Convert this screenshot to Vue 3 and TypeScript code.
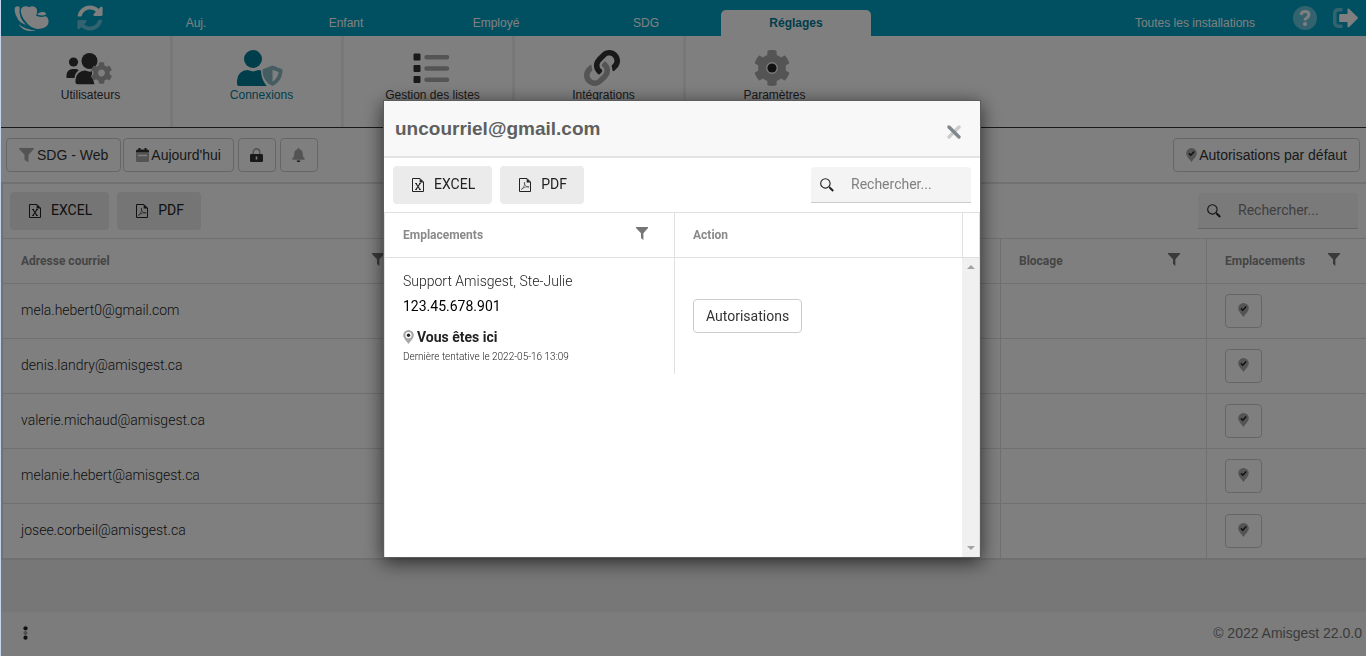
<script setup lang="ts">
import { ref } from 'vue'

interface RibbonItem {
  id: string
  label: string
  active?: boolean
}

const tabs: string[] = ['Auj.', 'Enfant', 'Employé', 'SDG', 'Réglages']
const activeTab = ref<string>('Réglages')

const ribbon: RibbonItem[] = [
  { id: 'users', label: 'Utilisateurs' },
  { id: 'shield', label: 'Connexions', active: true },
  { id: 'list', label: 'Gestion des listes' },
  { id: 'link', label: 'Intégrations' },
  { id: 'settings', label: 'Paramètres' },
]

const emails: string[] = [
  'mela.hebert0@gmail.com',
  'denis.landry@amisgest.ca',
  'valerie.michaud@amisgest.ca',
  'melanie.hebert@amisgest.ca',
  'josee.corbeil@amisgest.ca',
]

const search = ref('')
const dialogSearch = ref('')
</script>

<template>
  <svg class="sprite" aria-hidden="true">
    <symbol id="i-funnel" viewBox="0 0 12 13">
      <path d="M0 0h12v1L7.4 6.2V13L5 11V6.2L0 1z" fill="currentColor" />
    </symbol>
    <symbol id="i-search" viewBox="0 0 14 14">
      <circle cx="5.4" cy="5.4" r="4.7" fill="none" stroke="currentColor" stroke-width="1.1" />
      <path d="M8.8 8.8l1.2 1" stroke="currentColor" stroke-width="1" />
      <path d="M9.6 9.6l3.6 3.4" stroke="currentColor" stroke-width="2" />
    </symbol>
    <symbol id="i-excel" viewBox="0 0 13 14">
      <path d="M.5.5h7.500l3.500 3.500v9.500H.5z" fill="none" stroke="currentColor" stroke-width="1" />
      <path d="M7.700.4V4.500h4z" fill="currentColor" />
      <path d="M4 5.500l4 6M8 5.500l-4 6" stroke="currentColor" stroke-width="1.200" />
      <path d="M3.200 5.500H5M7 5.500h1.800M3.200 11.500H5M7 11.500h1.800" stroke="currentColor" stroke-width="1" />
    </symbol>
    <symbol id="i-pdf" viewBox="0 0 13 14">
      <path d="M.5.5h7.500l3.500 3.500v9.500H.5z" fill="none" stroke="currentColor" stroke-width="1" />
      <path d="M7.700.4V4.500h4z" fill="currentColor" />
      <path d="M5.500 4.200c-.6 2 .8 4.400 4.600 4.800C7.500 8.400 4.100 9.400 2.300 11.400c1.800-.4 3.800-4.400 3.200-7.200z" fill="none" stroke="currentColor" stroke-width=".8" opacity=".7" />
    </symbol>
    <symbol id="i-pin" viewBox="0 0 11 14">
      <path d="M5.500 0A5.300 5.300 0 0 0 .2 5.300C.2 8.200 3 10.500 5.500 14 8 10.500 10.800 8.200 10.800 5.300A5.300 5.300 0 0 0 5.500 0z" fill="#a8a8a8" />
      <path d="M2.900 5.400l1.900 1.800 3.400-3.600" fill="none" stroke="#222" stroke-width="1.500" />
    </symbol>
    <symbol id="i-cog" viewBox="0 0 512 512">
      <path fill="currentColor" d="M487.4 315.700l-42.600-24.600c4.300-23.200 4.300-47 0-70.200l42.600-24.600c4.900-2.800 7.100-8.600 5.500-14-11.100-35.600-30-67.800-54.700-94.600-3.800-4.100-10-5.100-14.800-2.300L380.800 110c-17.900-15.400-38.500-27.300-60.800-35.100V25.800c0-5.600-3.900-10.500-9.400-11.700-36.700-8.200-74.300-7.800-109.200 0-5.500 1.200-9.400 6.100-9.400 11.700V75c-22.200 7.900-42.800 19.800-60.800 35.100L88.700 85.500c-4.900-2.800-11-1.900-14.800 2.300-24.700 26.700-43.600 58.900-54.700 94.600-1.700 5.400.6 11.200 5.500 14L67.300 221c-4.300 23.200-4.300 47 0 70.200l-42.600 24.600c-4.900 2.800-7.100 8.600-5.500 14 11.100 35.600 30 67.800 54.700 94.600 3.800 4.100 10 5.100 14.800 2.300l42.600-24.600c17.900 15.400 38.500 27.300 60.800 35.100v49.200c0 5.600 3.900 10.500 9.400 11.700 36.700 8.200 74.300 7.800 109.200 0 5.500-1.200 9.400-6.100 9.400-11.700v-49.200c22.200-7.900 42.800-19.800 60.800-35.100l42.600 24.600c4.900 2.800 11 1.900 14.800-2.300 24.700-26.700 43.600-58.900 54.700-94.600 1.500-5.500-.7-11.300-5.600-14.100zM256 336c-44.100 0-80-35.900-80-80s35.900-80 80-80 80 35.900 80 80-35.900 80-80 80z" />
    </symbol>
    <symbol id="i-users" viewBox="0 0 46 36">
      <circle cx="7.500" cy="12" r="4.600" fill="#333" />
      <path d="M.5 28v-3a6 6 0 0 1 6-6h2.500c1.500 0 2.800.5 3.800 1.300-2.500 1.800-4 4.300-4.300 7.700z" fill="#333" />
      <circle cx="23.500" cy="11" r="8" fill="#333" />
      <path d="M9.500 32.500V30a9.500 9.500 0 0 1 9.500-9.500l4.500 1.200 2.500-.5v3l-1 2 2 3 1.500 5H11.500a2 2 0 0 1-2-1.700z" fill="#333" />
      <use href="#i-cog" x="24.500" y="12" width="22" height="22" color="#a9a9a9" />
    </symbol>
    <symbol id="i-shield" viewBox="0 0 46 36">
      <circle cx="16" cy="9" r="9" fill="#007c98" />
      <path d="M0 34v-3.500A10.500 10.500 0 0 1 10.500 20l5.500 1.500 5.500-1.500 2.500.4C24.300 27 26.500 32.500 30 36H2a2 2 0 0 1-2-2z" fill="#007c98" />
      <path d="M35.500 15.500l9 3.500c1 .4 1 1 1 2-.3 7-4 12-10 15-6-3-9.700-8-10-15 0-1 0-1.600 1-2zm0 4.200v12c3.800-2.400 5.800-5.700 6.200-9.600z" fill-rule="evenodd" fill="#8ab8c2" />
    </symbol>
    <symbol id="i-list" viewBox="0 0 46 36">
      <path d="M6 4h6v6H6zM6 15.500h6v6H6zM6 26.500h6v6H6z" fill="#333" stroke="#333" stroke-linejoin="round" />
      <path d="M18.500 7.200h20.500M18.500 18.500h20.500M18.500 29.700h20.500" stroke="#a9a9a9" stroke-width="4.500" stroke-linecap="round" />
    </symbol>
    <symbol id="i-link" viewBox="-71 0 654 512">
      <path fill="#a9a9a9" d="M326.612 185.391c59.747 59.809 58.927 155.698.36 214.590-.11.12-.24.25-.36.370l-67.200 67.200c-59.270 59.270-155.699 59.262-214.960 0-59.270-59.260-59.270-155.700 0-214.960l37.106-37.106c9.840-9.840 26.786-3.300 27.294 10.606.648 17.722 3.826 35.527 9.690 52.721 1.986 5.822.567 12.262-3.783 16.612l-13.087 13.087c-28.026 28.026-28.905 73.660-1.155 101.960 28.024 28.579 74.086 28.749 102.325.510l67.200-67.190c28.191-28.191 28.073-73.757 0-101.830-3.701-3.694-7.429-6.564-10.341-8.569a16.037 16.037 0 0 1-6.947-12.606c-.396-10.567 3.348-21.456 11.698-29.806l21.054-21.055c5.521-5.521 14.182-6.199 20.584-1.731a152.482 152.482 0 0 1 20.522 17.197z" />
      <path fill="#333" d="M467.547 44.449c-59.261-59.262-155.690-59.270-214.960 0l-67.200 67.200c-.12.12-.25.25-.36.370-58.566 58.892-59.387 154.781.36 214.590a152.454 152.454 0 0 0 20.521 17.196c6.402 4.468 15.064 3.789 20.584-1.731l21.054-21.055c8.350-8.350 12.094-19.239 11.698-29.806a16.037 16.037 0 0 0-6.947-12.606c-2.912-2.005-6.640-4.875-10.341-8.569-28.073-28.073-28.191-73.639 0-101.830l67.200-67.190c28.239-28.239 74.300-28.069 102.325.510 27.750 28.300 26.872 73.934-1.155 101.960l-13.087 13.087c-4.350 4.350-5.769 10.790-3.783 16.612 5.864 17.194 9.042 34.999 9.690 52.721.509 13.906 17.454 20.446 27.294 10.606l37.106-37.106c59.271-59.259 59.271-155.699.001-214.959z" />
    </symbol>
    <symbol id="i-settings" viewBox="0 0 46 36">
      <use href="#i-cog" x="3.500" y="-.5" width="37" height="37" color="#a9a9a9" />
      <circle cx="22" cy="18" r="4.600" fill="#222" />
    </symbol>
  </svg>

  <div class="page">
    <header class="topbar">
      <div class="brand">
        <svg class="logo" viewBox="0 0 105 80" role="img" aria-label="Amisgest">
          <g fill="#fff">
            <path d="M2 12C2 4 10 1 16 5c3 3-1 9 1 20 2 13 8 24 19 34-12-2-22-10-28-24C4 27 2 20 2 12z" />
            <path d="M21 12C24 3 38 0 45 6c9-6 22-2 24 8 1 8-1 13-3 18 8 4 18 4 30 1 9 5 10 21 3 29-10 11-37 14-53-1-14-12-28-31-25-49z" />
            <path d="M14 57c14 11 28 16 52 19-18 5-42 0-52-19z" />
            <path d="M70 28c3-8 20-10 26-4 1 8-14 8-26 4z" />
          </g>
        </svg>
        <button class="plain" type="button" aria-label="Actualiser">
          <svg width="26" height="26" viewBox="0 0 512 512" fill="#fff">
            <path d="M370.720 133.280C339.458 104.008 298.888 87.962 255.848 88c-77.458.068-144.328 53.178-162.791 126.850-1.344 5.363-6.122 9.150-11.651 9.150H24.103c-7.498 0-13.194-6.807-11.807-14.176C33.933 94.924 134.813 8 256 8c66.448 0 126.791 26.136 171.315 68.685L463.030 40.970C478.149 25.851 504 36.559 504 57.941V192c0 13.255-10.745 24-24 24H345.941c-21.382 0-32.090-25.851-16.971-40.971z" />
            <path opacity=".4" d="M32 296h134.059c21.382 0 32.090 25.851 16.971 40.971l-41.750 41.750c31.262 29.273 71.835 45.319 114.876 45.280 77.418-.07 144.315-53.144 162.787-126.849 1.344-5.363 6.122-9.150 11.651-9.150h57.304c7.498 0 13.194 6.807 11.807 14.176C478.067 417.076 377.187 504 256 504c-66.448 0-126.791-26.136-171.315-68.685L48.970 471.030C33.851 486.149 8 475.441 8 454.059V320c0-13.255 10.745-24 24-24z" />
          </svg>
        </button>
      </div>
      <nav class="tabs">
        <a v-for="t in tabs" :key="t" href="#" class="tab" :class="{ current: t === activeTab }" @click.prevent="activeTab = t">{{ t }}</a>
      </nav>
      <a href="#" class="sites">Toutes les installations</a>
      <button class="plain help" type="button" aria-label="Aide">
        <svg width="24" height="24" viewBox="0 0 24 24">
          <circle cx="12" cy="12" r="12" fill="#fff" opacity=".4" />
          <path d="M8 8.800C8.600 6.400 10 5.500 12 5.500c2.300 0 4 1.300 4 3.300 0 3.200-4 2.700-4 5.700" fill="none" stroke="#fff" stroke-width="3" />
          <circle cx="12" cy="18" r="2" fill="#fff" />
        </svg>
      </button>
      <button class="plain" type="button" aria-label="Quitter">
        <svg width="25" height="20" viewBox="0 0 25 20">
          <path d="M9.500 1.800H5A3.200 3.200 0 0 0 1.800 5v10A3.200 3.200 0 0 0 5 18.200h4.500" fill="none" stroke="#fff" stroke-width="3.600" opacity=".4" />
          <path d="M7.500 6h7V1.500c0-1 1-1.300 1.700-.6l8.300 8.200c.5.5.5 1.200 0 1.700l-8.300 8.300c-.7.700-1.700.4-1.700-.6V14h-7c-.8 0-1.300-.5-1.300-1.300V7.300c0-.8.500-1.300 1.300-1.300z" fill="#fff" />
        </svg>
      </button>
    </header>

    <nav class="ribbon">
      <a v-for="r in ribbon" :key="r.id" href="#" class="ribbon-item" :class="{ current: r.active }" @click.prevent>
        <svg width="46" height="36"><use :href="'#i-' + r.id" /></svg>
        <span>{{ r.label }}</span>
      </a>
    </nav>

    <div class="toolbar">
      <button type="button" class="btn">
        <svg width="15" height="14" viewBox="0 0 15 14"><path d="M.8 0h13.400c.8 0 1 .8.5 1.300L9.500 6.700V13.400c0 .6-.6.700-1 .4L6 12.200c-.3-.2-.5-.4-.5-.8V6.700L.3 1.300C-.2.8 0 0 .8 0z" fill="#a8a8a8" /></svg>
        <span class="wide">SDG - Web</span>
      </button>
      <button type="button" class="btn tight">
        <svg width="13" height="14" viewBox="0 0 13 14">
          <path d="M0 5h13v7.500a1.500 1.500 0 0 1-1.500 1.500h-10A1.500 1.500 0 0 1 0 12.500z" fill="#a8a8a8" />
          <path d="M0 4.500V3a1.500 1.500 0 0 1 1.500-1.500h1V0h2v1.500h4V0h2v1.500h1A1.500 1.500 0 0 1 13 3v1.500z" fill="#333" />
          <path d="M2 7.500h9" stroke="#fff" stroke-width="1.500" />
        </svg>
        <span>Aujourd'hui</span>
      </button>
      <button type="button" class="btn square first" aria-label="Verrouiller">
        <svg width="13" height="14" viewBox="0 0 13 14">
          <path d="M3.200 6.500V4.200a3.200 3.200 0 0 1 6.600 0v2.300" fill="none" stroke="#a8a8a8" stroke-width="1.600" />
          <rect y="6" width="13" height="8" rx="1.300" fill="#333" />
          <path d="M6.500 8.500v3" stroke="#fff" stroke-width="1.600" />
        </svg>
      </button>
      <button type="button" class="btn square" aria-label="Notifications">
        <svg width="13" height="14" viewBox="0 0 13 14">
          <path d="M5.700 0h1.600v1.200c2.400.4 3.400 2.200 3.400 4.300 0 3 1 4 1.900 5 .5.600.2 1.300-.6 1.300H1c-.8 0-1.100-.7-.6-1.300.9-1 1.900-2 1.900-5 0-2.100 1-3.900 3.400-4.300z" fill="#a8a8a8" />
          <path d="M4.700 12.400h3.600c0 2.100-3.600 2.100-3.600 0z" fill="#333" />
        </svg>
      </button>
      <button type="button" class="btn tight end">
        <svg width="11" height="14"><use href="#i-pin" /></svg>
        <span>Autorisations par défaut</span>
      </button>
    </div>

    <main class="grid">
      <div class="grid-tools">
        <button type="button" class="export"><svg width="13" height="14"><use href="#i-excel" /></svg><span>EXCEL</span></button>
        <button type="button" class="export"><svg width="13" height="14"><use href="#i-pdf" /></svg><span>PDF</span></button>
        <label class="search">
          <svg width="14" height="14"><use href="#i-search" /></svg>
          <input v-model="search" type="text" placeholder="Rechercher..." aria-label="Rechercher" />
        </label>
      </div>
      <table class="main-table">
        <colgroup>
          <col class="c-mail" /><col /><col class="c-block" /><col class="c-place" />
        </colgroup>
        <thead>
          <tr>
            <th><div class="th">Adresse courriel<svg width="12" height="13"><use href="#i-funnel" /></svg></div></th>
            <th></th>
            <th><div class="th">Blocage<svg width="12" height="13"><use href="#i-funnel" /></svg></div></th>
            <th><div class="th">Emplacements<svg width="12" height="13"><use href="#i-funnel" /></svg></div></th>
          </tr>
        </thead>
        <tbody>
          <tr v-for="e in emails" :key="e">
            <td class="mail">{{ e }}</td>
            <td></td>
            <td></td>
            <td>
              <button type="button" class="btn pin" :aria-label="'Emplacements de ' + e">
                <svg width="11" height="14"><use href="#i-pin" /></svg>
              </button>
            </td>
          </tr>
        </tbody>
      </table>
    </main>

    <footer class="footer">
      <button type="button" class="plain" aria-label="Menu">
        <svg width="5" height="14" viewBox="0 0 5 14">
          <circle cx="2.500" cy="7" r="2" fill="#a0a0a0" />
          <circle cx="2.500" cy="2.300" r="2.100" fill="#222" />
          <circle cx="2.500" cy="11.700" r="2.100" fill="#222" />
        </svg>
      </button>
      <span>© 2022 Amisgest 22.0.0</span>
    </footer>
  </div>

  <div class="overlay">
    <section class="dialog" role="dialog" aria-modal="true" aria-labelledby="dlg-title">
      <header class="dialog-head">
        <h2 id="dlg-title">uncourriel@gmail.com</h2>
        <button type="button" class="plain" aria-label="Fermer">
          <svg width="14" height="14" viewBox="0 0 14 14" stroke-width="3.300" stroke-linecap="round">
            <path d="M12 2L2 12" stroke="#ccc" />
            <path d="M2 2l10 10" stroke="#7f878c" />
          </svg>
        </button>
      </header>
      <div class="grid-tools">
        <button type="button" class="export"><svg width="13" height="14"><use href="#i-excel" /></svg><span>EXCEL</span></button>
        <button type="button" class="export"><svg width="13" height="14"><use href="#i-pdf" /></svg><span>PDF</span></button>
        <label class="search">
          <svg width="14" height="14"><use href="#i-search" /></svg>
          <input v-model="dialogSearch" type="text" placeholder="Rechercher..." aria-label="Rechercher" />
        </label>
      </div>
      <div class="dialog-table">
        <table>
          <colgroup><col class="c-site" /><col /></colgroup>
          <thead>
            <tr>
              <th><div class="th">Emplacements<svg width="12" height="13"><use href="#i-funnel" /></svg></div></th>
              <th><div class="th">Action</div></th>
            </tr>
          </thead>
          <tbody>
            <tr>
              <td>
                <p class="place">Support Amisgest, Ste-Julie</p>
                <p class="ip">123.45.678.901</p>
                <p class="here">
                  <svg width="11" height="14" viewBox="0 0 11 14">
                    <path d="M5.500 0A5.300 5.300 0 0 0 .2 5.300C.2 8.200 3 10.500 5.500 14 8 10.500 10.800 8.200 10.800 5.300A5.300 5.300 0 0 0 5.500 0z" fill="#a8a8a8" />
                    <circle cx="5.500" cy="5.200" r="3.100" fill="#fff" />
                    <circle cx="5.500" cy="5.200" r="1.700" fill="#222" />
                  </svg>
                  Vous êtes ici
                </p>
                <p class="attempt">Dernière tentative le 2022-05-16 13:09</p>
              </td>
              <td><button type="button" class="btn auth">Autorisations</button></td>
            </tr>
          </tbody>
        </table>
        <div class="gutter">
          <div class="gutter-head"></div>
          <div class="scrollbar">
            <svg width="8" height="4" viewBox="0 0 8 4"><path d="M0 4l4-4 4 4z" fill="#a3a3a3" /></svg>
            <svg width="8" height="4" viewBox="0 0 8 4"><path d="M0 0l4 4 4-4z" fill="#a3a3a3" /></svg>
          </div>
        </div>
      </div>
    </section>
  </div>
  <div class="edge"></div>
</template>

<style>
body {
  background: #eee;
}
</style>

<style scoped>
* {
  box-sizing: border-box;
}
.sprite {
  position: absolute;
  width: 0;
  height: 0;
}
svg {
  display: block;
  flex: none;
}
button {
  font: inherit;
  color: inherit;
  cursor: pointer;
}
a {
  color: inherit;
  text-decoration: none;
}
.plain {
  border: 0;
  padding: 0;
  background: none;
}
.page {
  min-height: 100vh;
  padding-left: 1px;
  display: flex;
  flex-direction: column;
  font: 14px/20px "Liberation Sans", Arial, sans-serif;
  color: #333;
}
.edge {
  position: fixed;
  inset: 0 auto 0 0;
  width: 1px;
  background: #c3d4ec;
}

/* Top bar */
.topbar {
  display: flex;
  align-items: center;
  height: 36px;
  padding-right: 8px;
  background: #00a1c5;
  color: #fff;
  font-size: 12px;
}
.brand {
  display: flex;
  align-items: center;
  gap: 28px;
  width: 120px;
  padding-left: 13px;
}
.logo {
  width: 35px;
  height: 27px;
}
.tabs {
  display: flex;
  align-self: flex-end;
}
.tab {
  width: 150px;
  height: 26px;
  line-height: 26px;
  text-align: center;
  border-radius: 5px 5px 0 0;
}
.tab.current {
  background: #fff;
  color: #007c98;
  font-weight: bold;
}
.sites {
  margin-left: auto;
  padding-top: 10px;
}
.help {
  margin: 0 16px 0 38px;
}

/* Ribbon */
.ribbon {
  display: flex;
  height: 92px;
  padding-left: 1px;
  background: #fff;
  border-bottom: 1px solid #333;
  font-size: 12px;
}
.ribbon-item {
  display: flex;
  flex-direction: column;
  align-items: center;
  width: 171px;
  padding: 14px 0 0 9px;
  border-right: 3px solid #f0f0f0;
  line-height: 19px;
}
.ribbon-item svg {
  margin-right: 3px;
}
.ribbon-item:last-child {
  border-right-color: transparent;
}
.ribbon-item.current {
  color: #007c98;
}

/* Buttons */
.btn {
  display: inline-flex;
  align-items: center;
  justify-content: center;
  height: 34px;
  padding: 0 12px;
  background: #fff;
  border: 1px solid #ccc;
  border-radius: 4px;
}
.toolbar {
  display: flex;
  align-items: center;
  height: 56px;
  padding: 0 6px 0 5px;
  background: #fff;
  border-bottom: 2px solid #e3e3e3;
}
.toolbar .btn {
  margin-right: 2px;
}
.toolbar .square {
  width: 38px;
  margin-right: 4px;
  padding: 0;
}
.toolbar .first {
  margin-left: 2px;
}
.toolbar .end {
  margin: 0 0 0 auto;
}
.tight {
  gap: 2px;
}
.wide {
  margin-left: 3px;
}

/* Grid */
.grid,
.dialog {
  font-family: Roboto, "Liberation Sans", sans-serif;
  background: #fff;
}
.grid {
  border-left: 2px solid #e3e3e3;
  border-bottom: 2px solid #e0e0e0;
}
.grid-tools {
  display: flex;
  align-items: center;
  gap: 8px;
  height: 54px;
  padding: 0 8px 0 7px;
}
.export {
  display: flex;
  align-items: center;
  gap: 9px;
  height: 38px;
  padding: 0 17px 0 19px;
  border: 0;
  border-radius: 4px;
  background: #ebebeb;
  color: #222;
}
.export span {
  padding-bottom: 2px;
}
.search {
  display: flex;
  align-items: center;
  gap: 17px;
  width: 160px;
  height: 36px;
  margin-left: auto;
  padding-left: 9px;
  background: #f4f4f4;
  border-bottom: 1px solid #ccc;
  border-radius: 4px 4px 0 0;
  color: #222;
}
.search input {
  flex: 1;
  min-width: 0;
  padding: 0 0 2px;
  border: 0;
  outline: 0;
  background: none;
  font: inherit;
}
.search input::placeholder {
  color: #808080;
}
table {
  width: 100%;
  border-collapse: separate;
  border-spacing: 0;
  table-layout: fixed;
}
th {
  height: 46px;
  padding: 0 26px 0 18px;
  border-top: 1px solid #e0e0e0;
  border-bottom: 1px solid #e0e0e0;
  border-right: 1px solid #e0e0e0;
  font-size: 12px;
  font-weight: bold;
  color: #8a8a8a;
  text-align: left;
}
.th {
  display: flex;
  justify-content: space-between;
}
.th svg {
  margin-top: 2px;
  color: #757575;
}
td {
  padding: 0 18px;
  border-right: 1px solid #e0e0e0;
}
.main-table td {
  height: 55px;
  border-bottom: 1px solid #e0e0e0;
  font-weight: 300;
  color: #222;
}
.main-table .mail {
  padding-bottom: 2px;
}
.main-table th:last-child,
.main-table td:last-child {
  border-right: 0;
}
.main-table tbody tr:last-child td {
  height: 54px;
  border-bottom: 0;
}
.c-mail {
  width: 408px;
}
.c-block {
  width: 206px;
}
.c-place {
  width: 159px;
}
.c-site {
  width: 290px;
}
.pin {
  width: 37px;
  padding: 0 0 2px;
  vertical-align: middle;
}

/* Footer */
.footer {
  display: flex;
  align-items: center;
  justify-content: space-between;
  height: 44px;
  margin-top: auto;
  padding: 0 4px 2px 22px;
  background: #f8f8f8;
  color: #777;
}

/* Dialog */
.overlay {
  position: fixed;
  inset: 0;
  display: flex;
  align-items: center;
  justify-content: center;
  padding: 2px 2px 0 0;
  background: rgba(0, 0, 0, 0.5);
}
.dialog {
  width: 598px;
  border: 1px solid #5c5c5c;
  box-shadow: 0 4px 18px rgba(0, 0, 0, 0.65);
  font-size: 14px;
  line-height: 20px;
}
.dialog-head {
  display: flex;
  align-items: center;
  justify-content: space-between;
  height: 57px;
  padding: 0 19px 0 11px;
  background: #f8f8f8;
  border-bottom: 2px solid #e3e3e3;
  font-family: "Liberation Sans", Arial, sans-serif;
}
.dialog-head h2 {
  margin: 0;
  font-size: 19px;
  line-height: 24px;
  color: #5f5f5f;
}
.dialog-head button {
  margin-top: 6px;
}
.dialog .grid-tools {
  padding: 0 9px;
}
.dialog-table {
  display: flex;
  min-height: 345px;
  border-left: 1px solid #e0e0e0;
}
.dialog-table table {
  flex: 1;
  align-self: flex-start;
}
.dialog-table th:last-child {
  border-right: 0;
}
.dialog-table td:last-child {
  border-right: 0;
}
.dialog-table td {
  height: 116px;
}
.dialog-table td:first-child {
  padding-top: 6px;
}
.gutter {
  display: flex;
  flex-direction: column;
  width: 18px;
  border-right: 1px solid #ddd;
}
.gutter-head {
  height: 46px;
  border: 1px solid #e0e0e0;
  border-right: 0;
}
.scrollbar {
  flex: 1;
  display: flex;
  flex-direction: column;
  justify-content: space-between;
  align-items: center;
  padding: 7px 0;
  background: #f0f0f0;
}
.dialog p {
  margin: 0;
  color: #222;
}
.dialog .place {
  margin-bottom: 5px;
  font-weight: 300;
}
.dialog .ip {
  margin-bottom: 11px;
  color: #000;
}
.dialog .here {
  display: flex;
  align-items: center;
  gap: 3px;
  font-weight: bold;
}
.dialog .attempt {
  font-size: 10px;
  font-weight: 300;
}
.auth {
  color: #333;
  vertical-align: middle;
}
</style>
